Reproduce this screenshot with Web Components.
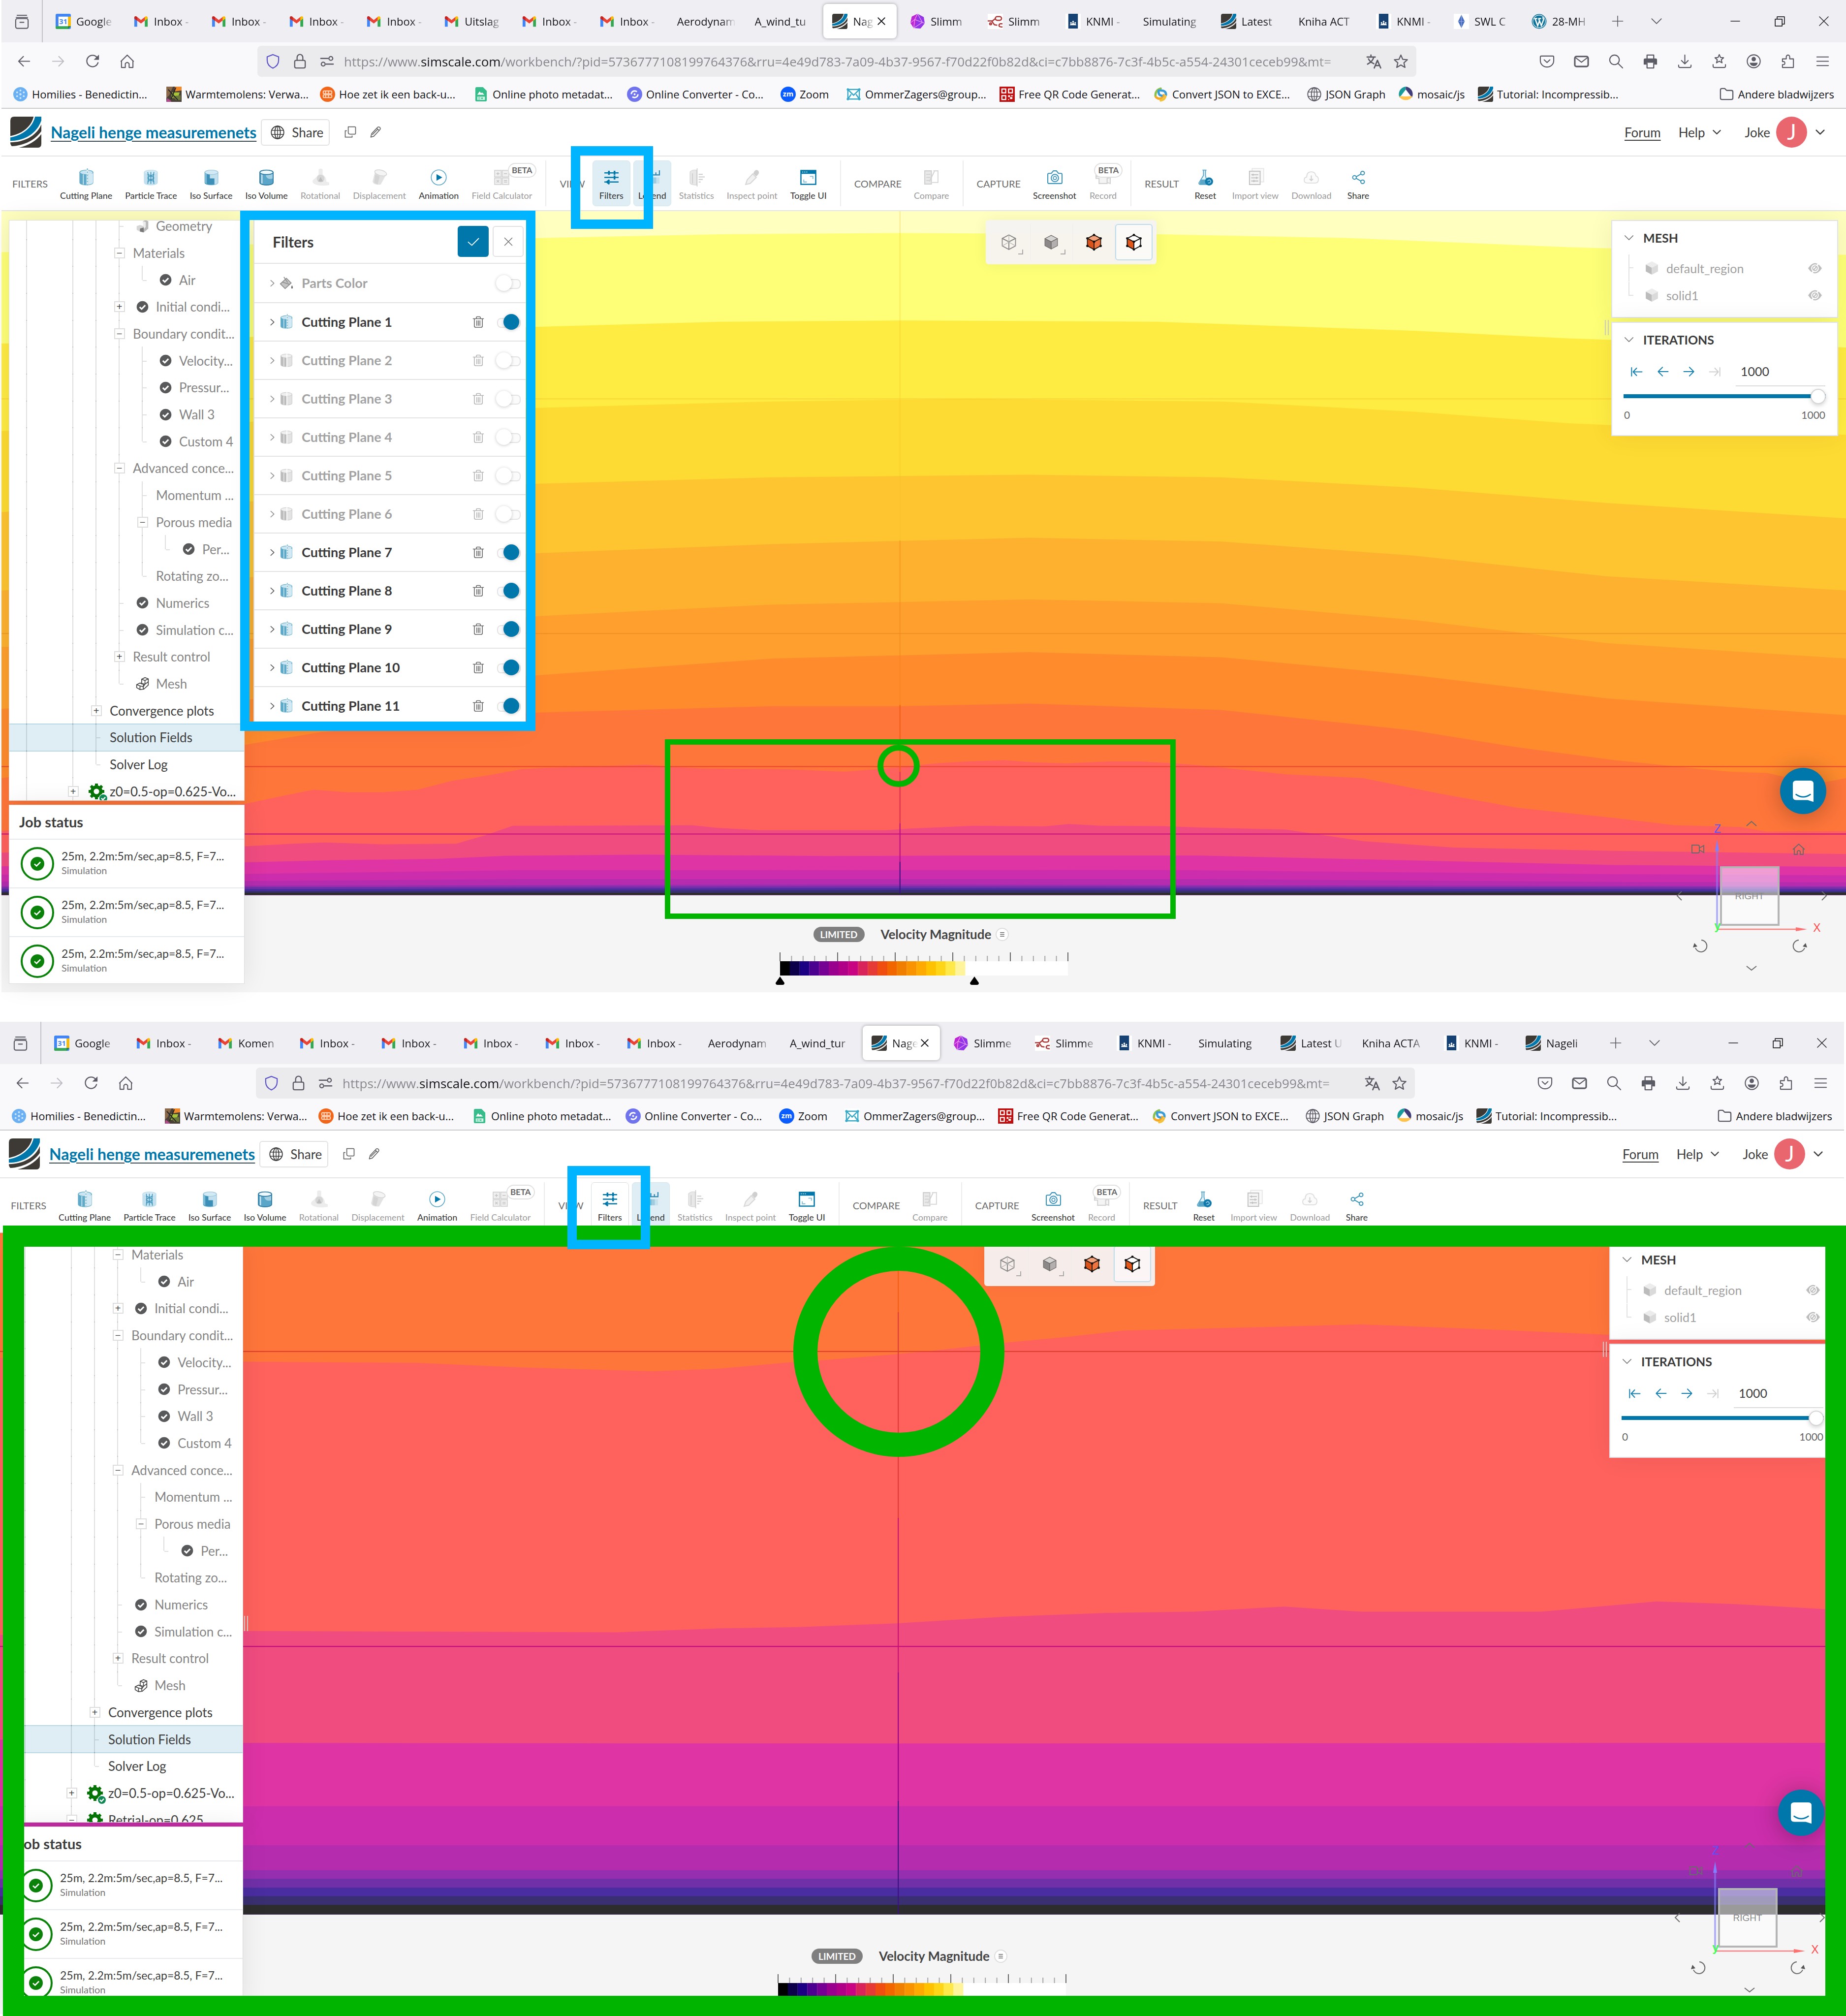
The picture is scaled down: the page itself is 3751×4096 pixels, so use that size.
<!DOCTYPE html>
<html lang="nl">
<head>
<meta charset="utf-8">
<title>Nageli henge measuremenets</title>
<style>
html,body{margin:0;background:#fff}
body{font-family:"Open Sans","Noto Sans",sans-serif;color:#15141a}
</style>
</head>
<body>
<compare-page></compare-page>
<script>
const LATO = 'Lato,"Open Sans",sans-serif';
const UI = '"Open Sans","Noto Sans",sans-serif';

/* ---------- icon set: 16 unit grid unless a viewBox is given ---------- */
const S = (d, w = 1) => `<path d="${d}" fill="none" stroke="currentColor" stroke-width="${w}" stroke-linecap="round" stroke-linejoin="round"/>`;
const CYL = (body, top, line) => `<path d="M1.5 3V13C1.5 16.2 14.5 16.2 14.5 13V3Z" fill="${body}" stroke="${line}" stroke-width=".7"/><ellipse cx="8" cy="3" rx="6.5" ry="2.2" fill="${top}" stroke="${line}" stroke-width=".7"/>`;
const CUBE = (t, l, r, s, w) => `<path d="M8 1.5L14 4.6 8 7.7 2 4.6Z" fill="${t}" stroke="${s}" stroke-width="${w}" stroke-linejoin="round"/><path d="M2 4.6L8 7.7V14.6L2 11.4Z" fill="${l}" stroke="${s}" stroke-width="${w}" stroke-linejoin="round"/><path d="M14 4.6L8 7.7V14.6L14 11.4Z" fill="${r}" stroke="${s}" stroke-width="${w}" stroke-linejoin="round"/>`;
const DOTS = [[8,1.5],[14,4.6],[2,4.6],[8,7.7],[8,14.6],[2,11.4],[14,11.4]].map(p => `<circle cx="${p[0]}" cy="${p[1]}" r="1.1" fill="#111"/>`).join('');
const LOGO = `<path d="M4 0H24C22 10 12 18 0 20V4Q0 0 4 0Z" fill="#3d3935"/><path d="M25.500 0H32V4C27 18 14 25 0 25V21.500C13 19 23 11 25.500 0Z" fill="#0077ab"/><path d="M32 8V15C26 24 14 30 1.500 30.500Q0 29 0 26.500C14 26.500 27 20 32 8Z" fill="#3d3935"/><path d="M32 18V28Q32 32 28 32H9C18 30 27 25 32 18Z" fill="#3d3935"/>`;
const ICONS = {
  archive: S('M3 1.5H13M2 3.8H14', 1) + `<rect x="1.500" y="5" width="13" height="10.300" rx="1.800" fill="none" stroke="currentColor" stroke-width="1.100"/>` + S('M6 9H10', 1.1),
  back: S('M14 8H2.500M7.500 3L2.500 8L7.500 13', 1.1),
  fwd: S('M2 8H13.500M8.500 3L13.500 8L8.500 13', 1.1),
  reload: S('M13.500 9.500A6 6 0 1 1 12.500 4', 1.2) + `<path d="M14.500 1V6.500H9Z" fill="currentColor"/>`,
  home: S('M2 7.500V14.500H6V10.500Q8 8 10 10.500V14.500H14V7.500M1.500 8L8 1.500L14.500 8', 1.1),
  shield: `<path d="M8 1L14 3.300V7C14 11 11.500 13.700 8 15.200C4.500 13.700 2 11 2 7V3.300Z" fill="none" stroke="#5a50c8" stroke-width="1.100"/>`,
  lock: `<rect x="2.500" y="7" width="11" height="8" rx="1.500" fill="none" stroke="currentColor" stroke-width="1.200"/>` + S('M5 7V4A3 3.200 0 0 1 11 4V7', 1.2),
  perms: S('M1.500 5H9M7 11H14.500', 1.3) + `<circle cx="12" cy="5" r="2" fill="none" stroke="currentColor" stroke-width="1.200"/><circle cx="4" cy="11" r="2" fill="none" stroke="currentColor" stroke-width="1.200"/>`,
  translate: S('M1 3.500H9.500M5 1.500V3.500M8 3.500C7 7.500 4.500 9.500 1.500 11M2.500 5.500C3.500 8 6 9.500 8 10.500M8.500 15L11.800 7L15.200 15M9.500 12.500H14', 1.4),
  star: S('M8 1.500L10 6L14.800 6.400L11.200 9.600L12.300 14.400L8 11.900L3.700 14.400L4.800 9.600L1.200 6.400L6 6Z', 1.2),
  pocket: S('M2 2.500H14Q15 2.500 15 3.500V7.500A7 6.500 0 0 1 1 7.500V3.500Q1 2.500 2 2.500M5 6.500L8 9.300L11 6.500', 1.1),
  mail: `<rect x="1" y="3" width="14" height="10.500" rx="1.800" fill="none" stroke="currentColor" stroke-width="1.600"/>` + S('M1.500 4L8 9L14.500 4', 1.1),
  search: `<circle cx="6.500" cy="6.500" r="5" fill="none" stroke="currentColor" stroke-width="1.100"/>` + S('M10.300 10.300L15 15', 1.1),
  print: `<path d="M2.500 5H13.500Q15 5 15 6.500V11.500H12V9.500H4V11.500H1V6.500Q1 5 2.500 5Z" fill="currentColor"/>` + S('M4.500 5V1.500H11.500V5M4.500 10V15H11.500V10', 1.2),
  download: S('M8 1.500V10.500M4.500 7.200L8 10.700L11.500 7.200M1.500 12V13Q1.500 14.500 3 14.500H13Q14.500 14.500 14.500 13V12', 1.1),
  starbox: S('M8 1L9.300 4L12.500 4.300L10.100 6.400L10.900 9.600L8 7.900L5.100 9.600L5.900 6.400L3.500 4.300L6.700 4ZM1.500 11.500V13Q1.500 14.500 3 14.500H13Q14.500 14.500 14.500 13V11.500', 1.1),
  account: `<circle cx="8" cy="8" r="6.800" fill="none" stroke="currentColor" stroke-width="1.100"/><circle cx="8" cy="5.700" r="2.300" fill="currentColor"/><path d="M3.800 9.500H12.200Q11.500 13 8 13Q4.500 13 3.800 9.500Z" fill="currentColor"/>`,
  puzzle: S('M2 5.500H6V3.500A1.800 2 0 0 1 9.600 3.500V5.500H13.500V14.500H2V11.500H3.500A1.600 1.700 0 0 0 3.500 8.300H2Z', 1.1),
  menu: S('M2 3.500H14M2 8H14M2 12.500H14', 1.1),
  plus: S('M8 1.500V14.500M1.500 8H14.500', 1), down: S('M2 5L8 11L14 5', 1.1), caret: S('M2 5L8 11L14 5', 1.9), chevr: S('M5 2.500L11 8L5 13.500', 1.6),
  min: S('M2 8H14', 1.1), restore: S('M2 5H11V14H2ZM4.500 5V2H14V11.500H11', 1.1), close: S('M2 2L14 14M14 2L2 14', 1), tabx: S('M2 2L14 14M14 2L2 14', 1.6),
  folder: S('M1.500 3.500Q1.500 2 3 2H6L8 4H13Q14.500 4 14.500 5.500V12Q14.500 13.500 13 13.500H3Q1.500 13.500 1.500 12Z', 1.2),
  globe: `<circle cx="8" cy="8" r="6.800" fill="none" stroke="currentColor" stroke-width="1"/><ellipse cx="8" cy="8" rx="3" ry="6.800" fill="none" stroke="currentColor" stroke-width="1"/>` + S('M1.500 5.700H14.500M1.500 10.300H14.500M8 1.200V14.800', .8),
  copy: S('M5.500 1.500H13Q14 1.500 14 2.500V9Q14 10 13 10H7.500Q5.500 10 5.500 8ZM3.500 6H2V13.500H10V12', 1),
  pencil: S('M2.500 13.500L3.500 9.500L10.500 2Q12 1 13.300 2.500Q14 4 13 5L6 12.500ZM9.500 3.200L12 5.700M4.500 10.500L10.500 4.500', 1),
  cal: `<rect x="0" y="0" width="16" height="16" rx="1.500" fill="#4285f4"/><path d="M13 3H16V13H13Z" fill="#fbbc04"/><path d="M0 13H13V16H1.500Q0 16 0 14.500Z" fill="#34a853"/><path d="M13 13H16L13 16Z" fill="#1b8a3e"/><rect x="3" y="3" width="10" height="10" fill="#fff"/><text x="8" y="10.800" text-anchor="middle" font-size="7.500" font-weight="700" font-family="Open Sans" fill="#4285f4">31</text>`,
  gmail: `<path d="M1 4V13.500H4V7Z" fill="#4285f4"/><path d="M15 4V13.500H12V7Z" fill="#34a853"/><path d="M1 3.500Q1.500 2 3.500 3L8 6.600L12.500 3L12.500 6.700L8 10.200L1 5Z" fill="#ea4335"/><path d="M12 3.300Q14.500 1.700 15 4V5L12 7.300Z" fill="#fbbc04"/><path d="M1 4Q1.300 2.300 3 2.700L4 3.500V7.300L1 5Z" fill="#c5221f"/>`,
  logo: [32, LOGO],
  sentry: `<path d="M8 0L14.500 3.500L15.500 10L11 15.500L4 15L.5 9.500L2 3Z" fill="#9334e6"/><path d="M8 0L2 3L.5 9.500L4 15L6 11Z" fill="#c026d3"/><path d="M8 0L5 6L13 9L8 0M5 6L4 15L13 9M.5 9.500L5 6M13 9L15.500 10" fill="none" stroke="#e9a8ff" stroke-width=".6"/>`,
  redgraph: `<rect width="16" height="16" fill="#fff"/><g fill="none" stroke="#b03a3a" stroke-width="1.300"><rect x="8" y="3" width="6.500" height="3.800" rx="1.900"/><path d="M0 7.500H5L8 5M4 7.500L7 11.500L10 12"/><circle cx="3" cy="10.500" r="1"/><path d="M15.500 10.500H13Q11.500 11 12 13Q13 14 15.500 13.800"/></g>`,
  knmi: `<rect width="16" height="16" fill="#fff"/><rect x="3" y="0" width="10" height="15.500" fill="#154273"/><g fill="#fff"><circle cx="5.800" cy="9.500" r=".8"/><circle cx="8" cy="8.300" r=".9"/><circle cx="10.200" cy="9.500" r=".8"/><path d="M4.500 12Q5.800 9.500 6.600 10.800L8 8.800L9.400 10.800Q10.200 9.500 11.500 12Z"/></g>`,
  swl: `<rect width="16" height="16" fill="#fff"/><path d="M8 1L11.500 8L8 15L4.500 8Z" fill="#4a6fc0"/><path d="M8 1V15M4.500 8H11.500" stroke="#8ea9dd" stroke-width=".6"/>`,
  wp: `<circle cx="8" cy="8" r="7.700" fill="#0f7299"/><circle cx="8" cy="8" r="6.600" fill="none" stroke="#cfe6ef" stroke-width=".7"/><path d="M2.800 5H6M3.700 5L6.500 12.500L8.300 7.500M7 5H10M7.500 5L10.300 12.500L12.500 6.500Q12.700 4.500 11.500 3.800" fill="none" stroke="#fff" stroke-width="1.300"/>`,
  homil: `<circle cx="8" cy="8" r="7.500" fill="#6ab0f3"/><g fill="#cfe6ff"><circle cx="8" cy="8" r="1.200"/><circle cx="8" cy="4" r="1"/><circle cx="8" cy="12" r="1"/><circle cx="4.500" cy="6" r="1"/><circle cx="11.500" cy="6" r="1"/><circle cx="4.500" cy="10" r="1"/><circle cx="11.500" cy="10" r="1"/></g>`,
  warm: `<rect width="16" height="16" fill="#4a4038"/><path d="M0 0H7L3 9L0 12Z" fill="#8a6a4a"/><path d="M9 0H16V4L9 5Z" fill="#f08a2a"/><path d="M6 6H14L12 12H5Z" fill="#a6c33a"/><path d="M6 10L10 14H15V9Z" fill="#6b7a3a"/><path d="M1 12L5 15V16H0Z" fill="#b04a8a"/><path d="M2 3L12 14M10 1L5 13" stroke="#222" stroke-width="1"/>`,
  cool: `<circle cx="8" cy="8" r="8" fill="#f2661a"/><g fill="none" stroke="#ffd9c2" stroke-width="1"><rect x="3.500" y="4.500" width="9" height="3" rx="1"/><rect x="3.500" y="8.500" width="9" height="3" rx="1"/><path d="M6 4.500V7.500M9 4.500V7.500M6 8.500V11.500M9 8.500V11.500"/></g>`,
  exif: `<path d="M2 2Q2 .5 3.500 .5H10L14 4.500V14Q14 15.500 12.500 15.500H3.500Q2 15.500 2 14Z" fill="#36bd8b"/><path d="M4 8.500L6.500 5L8 7L9 6L11.500 8.500Z" fill="#fff"/><rect x="4" y="10.500" width="8" height="3.500" fill="#d8f5ea"/><path d="M5 11.500H7M5 13H7M8 11.500L10 13M10 11.500L8 13" stroke="#36bd8b" stroke-width=".6"/>`,
  conv: `<circle cx="8" cy="8" r="8" fill="#6f73ee"/><circle cx="8" cy="8" r="3.500" fill="none" stroke="#fff" stroke-width="1.500" stroke-dasharray="8 3"/><circle cx="8" cy="8" r="1" fill="#fff"/>`,
  zoom: `<circle cx="8" cy="8" r="8" fill="#0b5cff"/><text x="8" y="10.500" text-anchor="middle" font-size="7.500" font-weight="700" font-family="Open Sans" fill="#fff">zm</text>`,
  ommer: `<rect width="16" height="16" fill="#fff"/><path d="M2 3H14V13H2ZM2 3L8 9L14 3M2 13L5.500 8M14 13L10.500 8" fill="none" stroke="#38a9c9" stroke-width="1.300"/><g fill="#38a9c9"><circle cx="2" cy="3" r="1.300"/><circle cx="14" cy="3" r="1.300"/><circle cx="2" cy="13" r="1.300"/><circle cx="14" cy="13" r="1.300"/></g>`,
  qr: `<rect width="16" height="16" fill="#c00d0d"/><g fill="none" stroke="#fff" stroke-width="1.200"><rect x="2.500" y="2.500" width="4" height="4"/><rect x="9.500" y="2.500" width="4" height="4"/><rect x="2.500" y="9.500" width="4" height="4"/></g><path d="M9 9H11V11H13.500V13H11V11H9ZM12 9H14V10H12ZM9 13H10V14H9Z" fill="#fff"/>`,
  json: `<g fill="none" stroke-width="2.400" stroke-linecap="round"><path d="M8 2Q2 4 2.500 10" stroke="#8cc152"/><path d="M3 11Q8 15 11 9" stroke="#f6a821"/><path d="M6 4Q5 9 9 9.500" stroke="#3b9dd8"/><path d="M8 4Q14 4 13.500 9" stroke="#3b9dd8"/><path d="M13 10Q12 14 8 14.500" stroke="#f3c13a"/></g>`,
  mosaic: `<path d="M8 0A8 8 0 0 0 1.500 11.500L8 3Z" fill="#179b9b"/><path d="M8 0A8 8 0 0 1 14.500 11.500L8 3Z" fill="#403d7a"/><path d="M1 10H15A8 8 0 0 1 1 10Z" fill="#ffc34d"/><path d="M8 5L11 10H5Z" fill="#fff"/>`,
  /* toolbar */
  cut: CYL('#a8d3e6', '#c9e5f1', '#6db1cd') + `<path d="M1.500 3Q3 5 8 5.200V15.300Q1.500 15.300 1.500 13Z" fill="#5fa9c9"/><path d="M5 5V15" stroke="#d6edf6" stroke-width=".8"/><path d="M9 -1V17" stroke="#fff" stroke-width="1.500"/><path d="M9 -1V17" stroke="#6db1cd" stroke-width=".9" stroke-dasharray="2 1"/><path d="M10 4H14.500V13Q14 14.500 10 15Z" fill="#d3e9f3"/>`,
  particle: CYL('#c2e0ee', '#d3e9f3', '#c2e0ee') + `<g color="#3c94bb">` + S('M5 3Q6 8 5 14M11 3Q10 8 11 14M8 3V14M5 5L11 8M11 5L5 8M5 9L11 12M11 9L5 12', .8) + `</g>`,
  isosurf: CYL('#c2e0ee', '#d3e9f3', '#9fcbdf') + `<path d="M1.500 3Q3 5 6.500 5.200V9H11V15Q1.500 16 1.500 13Z" fill="#3c8fb6"/><path d="M1.500 3L3.500 4.500V14.500L1.500 13Z" fill="#7cbbd6"/>`,
  isovol: CYL('#a3cfe2', '#f0f8fb', '#2f88b2') + `<path d="M1.500 4V13C1.500 16.200 14.500 16.200 14.500 13V9Q8 11 7 5Q2 5 1.500 4Z" fill="#5ba6c8"/><path d="M3.500 5V14" stroke="#cfe7f1" stroke-width="1.200"/>` + `<path d="M1.500 3V13C1.500 16.200 14.500 16.200 14.500 13V3" fill="none" stroke="#2f7ea8" stroke-width=".9"/><ellipse cx="8" cy="3" rx="6.500" ry="2.200" fill="#eff8fc" stroke="#2f7ea8" stroke-width=".9"/>`,
  rot: `<path d="M6 0Q8 -1.500 10 0V5Q14 8 13.500 12L16.500 13V15.500Q8 17 2 14.500Q-1 13 .5 10.500Q4 8 6 5Z" fill="#ececec"/><circle cx="8" cy="9" r="3.800" fill="#d6d6d6"/><path d="M8 7.500L10.500 12H5.500Z" fill="#bdbdbd"/>`,
  disp: `<path d="M3.500 2L1 12Q2 16 9 15L14.500 5Z" fill="#e2e2e2"/><ellipse cx="9" cy="3.500" rx="6" ry="2.700" transform="rotate(14 9 3.500)" fill="#f4f4f4" stroke="#d2d2d2" stroke-width=".7"/><path d="M3.500 5L2.500 13L6 15L8 7Z" fill="#d4d4d4"/>`,
  anim: `<circle cx="8" cy="8" r="7.400" fill="#fff" stroke="#5aa6c7" stroke-width=".8"/><path d="M5.800 4.700L11.500 8L5.800 11.300Z" fill="#0077ab"/>`,
  calc: `<g fill="#efefef" stroke="#d0d0d0" stroke-width=".8"><rect x="1" y="1" width="6.500" height="6.500"/><rect x="8.500" y="1" width="6.500" height="6.500"/><rect x="1" y="8.500" width="6.500" height="6.500"/><rect x="8.500" y="8.500" width="6.500" height="6.500"/></g>` + `<path d="M4.200 2.800V5.800M2.700 4.200H5.800M10.200 4.200H13.300M3 10.500L5.500 13M5.500 10.500L3 13M10.200 11H13.300M10.200 12.600H13.300" stroke="#c2c2c2" stroke-width=".7"/>`,
  filters: `<g stroke="#0077ab" stroke-width="1.300" fill="#0077ab"><path d="M1 3.500H15M1 8H15M1 12.500H15"/></g><path d="M11 1.500V5.500M5.500 1.500V5.500M11 6V10M6 10.500L3.500 12.500L6 14.500" stroke="#0077ab" stroke-width="1.700" fill="none"/>`,
  legend: `<path d="M1 1V5.500H15V1M4.500 3V5M8 2V5M11.500 3V5" stroke="#2f88b2" stroke-width="1.100" fill="none"/><path d="M1 8H5V14H1Z" fill="#3c94bb"/><path d="M5 8H9V14H5Z" fill="#7cbbd6"/><path d="M9 8H12V14H9Z" fill="#9fcbdf"/><path d="M12 8H15V14H12Z" fill="#c6e0ec"/>`,
  stats: `<path d="M1.500 2.500Q4 0 8 .8V15.500Q1.500 15.500 1.500 13Z" fill="#e8e8e8" stroke="#d4d4d4" stroke-width=".6"/><path d="M4 4V14M8.500 -1V17" stroke="#ccc" stroke-width=".8"/><path d="M10 5H14M10 7.500H16M10 10H14M10 12.500H12" stroke="#ccc" stroke-width="1"/>`,
  inspect: `<path d="M10 2Q12 -.5 14 1.500Q15.500 3.500 13.500 5.500L12 7L9 4Z" fill="#cfcfcf"/><path d="M8.500 4.500L12 8L6 14L1.500 15L3 10.500Z" fill="#f1f1f1" stroke="#d6d6d6" stroke-width="1"/>`,
  toggle: `<rect x=".7" y="1.200" width="14.600" height="13.600" fill="#fff" stroke="#0077ab" stroke-width="1.200"/><rect x=".7" y="1.200" width="14.600" height="3.300" fill="#0077ab"/><path d="M2 2.700H3M4 2.700H5M6 2.700H7" stroke="#fff" stroke-width=".7"/><path d="M9.500 7H12.500V9.500M3.500 10V12.500H6.500" fill="none" stroke="#7cbbd6" stroke-width=".9"/>`,
  compare: `<path d="M1.500 1.500H8V14.500H1.500Z" fill="#e9e9e9" stroke="#cfcfcf"/><path d="M10 1.500H14.500V13H8.500" fill="#fff" stroke="#d8d8d8"/><path d="M3 5H7M3 8H7M3 11H6M11 2L6 12" stroke="#d2d2d2"/>`,
  camera: `<path d="M1 5Q1 4 2 4H4.500L6.500 1.500H9.500L11.500 4H14Q15 4 15 5V13Q15 14 14 14H2Q1 14 1 13Z" fill="none" stroke="#3c94bb" stroke-width="1"/><circle cx="8" cy="8.600" r="3.600" fill="none" stroke="#3c94bb" stroke-width="1"/><circle cx="8" cy="8.600" r="1.600" fill="none" stroke="#3c94bb" stroke-width=".8"/>`,
  record: `<path d="M2 2V7H12M3 7H12V14H4V9H1V5" fill="#f4f4f4" stroke="#d2d2d2" stroke-width="1"/><path d="M12 9L15 8V14L12 13Z" fill="#f4f4f4" stroke="#d2d2d2"/>`,
  reset: `<path d="M5 .8H9M6 1V6L1.500 13.500Q1.500 15 3 15H10L8 6V1" fill="#e6f3f8" stroke="#5aa6c7" stroke-width=".9"/><path d="M3.500 10H9V14.500H2Z" fill="#5aa6c7"/><circle cx="11.500" cy="12" r="4" fill="#0f7aab"/><path d="M10 11.500Q12 9 13.300 12Q12.500 14 10.500 13.300" fill="none" stroke="#9fd0e6" stroke-width=".8"/>`,
  importv: `<rect x="4" y="-2" width="13" height="15" fill="#fafafa" stroke="#e4e4e4" stroke-width=".9"/><rect x="1" y="1" width="12" height="15" fill="#f4f4f4" stroke="#bdbdbd" stroke-width="1"/><path d="M3 5H11M3 8.500H11M3 12H11M5 3.800V6.200M9 7.300V9.700M6 10.800V13.200" stroke="#bdbdbd" stroke-width="1"/>`,
  cloud: `<path d="M4 13.500Q1 13.500 1 10.500Q1 8 3.500 7.500Q3.500 2.500 8 2.500Q12 2.500 12.500 6.500Q15.200 7.300 15 10.500Q14.700 13.500 12 13.500Z" fill="#fbfbfb" stroke="#dcdcdc" stroke-width=".9"/><path d="M8 6V11M6.300 9.500L8 11.200L9.700 9.500" fill="none" stroke="#d0d0d0"/>`,
  share: `<path d="M5.500 7.500L10.500 4.500M5.500 8.800L10.500 11.700" stroke="#3c94bb"/><g fill="#fff" stroke="#3c94bb"><circle cx="4" cy="8" r="1.800"/><circle cx="12" cy="3.700" r="1.800"/><circle cx="12" cy="12.300" r="1.800"/></g>`,
  /* tree and panels */
  check: `<circle cx="8" cy="8" r="7" fill="#58595b"/><path d="M4.600 8.200L7 10.600L11.400 6" fill="none" stroke="#fff" stroke-width="1.800"/>`,
  geom: `<path d="M8.500 2L12 .8L15 2V11L9.500 15.500V8.500Z" fill="#b9b9b9"/><path d="M8.500 2L12 3V9L9 12V9Z" fill="#ececec"/><path d="M1 8L5 6.500L9.500 8V15L5 14.500L1 12.500Z" fill="#d6d6d6"/><path d="M5 11L9.500 9.500V15.500L5 14.500Z" fill="#777"/>`,
  mesh: `<g fill="none" stroke="#444" stroke-width="1"><path d="M7 3L11 1L15 2.500V10L9.500 15L5 15.500L1 13V9.500L5 7.500L7 8.500ZM7 3L11 4.500L15 2.500M11 4.500V9L9 12L5 11L1 9.500M9 12V15.500M5 11V15.500M7 8L11 9M11 9L15 6M5 7.500L9 9V12"/></g>`,
  gear: `<path d="M8 2.500V0M8 13.500V16M2.500 8H0M13.500 8H16M4 4L2.300 2.300M12 4L13.700 2.300M4 12L2.300 13.700M12 12L13.700 13.700" stroke="#067306" stroke-width="3"/><circle cx="8" cy="8" r="4.500" fill="#fff" stroke="#067306" stroke-width="3.400"/><circle cx="15" cy="15" r="4.300" fill="#0f8a55" stroke="#fff" stroke-width=".6"/><path d="M13 15L14.600 16.500L17 13.800" fill="none" stroke="#fff" stroke-width="1.200"/>`,
  ok: S('M1.500 8.500L6 12.500L14.500 4', 1.1),
  x: S('M3 3L13 13M13 3L3 13', 1.1),
  bucket: `<path d="M1 9L8 2.500L13.500 8L6.500 14.500Z" fill="#c4c4c4" stroke="#8d8d8d" stroke-width="1"/><path d="M3.500 7L11.500 9.500M5 1L9.500 7.500" stroke="#8d8d8d"/><path d="M14.500 10.500Q16.500 14 14.500 14.500Q12.500 14 14.500 10.500Z" fill="#666"/>`,
  trash: S('M1.500 4H14.500M5.500 4V2.500Q5.500 1.500 6.500 1.500H9.500Q10.500 1.500 10.500 2.500V4M3 4V13Q3 14.800 4.800 14.800H11.200Q13 14.800 13 13V4M6 6.500V12.500M8 6.500V12.500M10 6.500V12.500', 1),
  cubeg: CUBE('#ececec', '#bcbcbc', '#dadada', 'none', 0),
  cubew: CUBE('none', 'none', 'none', '#8a8a8a', .8) + `<path d="M8 1.500V8M2 11.400L8 8L14 11.400" stroke="#b5b5b5" stroke-width=".6" fill="none"/>`,
  cubes: CUBE('#d6d3d3', '#8c8888', '#b3afaf', '#6b6767', .6),
  cubeo: CUBE('#f4a27c', '#d9521a', '#ee7440', '#2b1a10', .8) + DOTS,
  cubeh: CUBE('#fff', '#e2561a', '#fff', '#1c1c1c', .9) + DOTS,
  eye: `<path d="M0 8Q8 -4 16 8Q8 20 0 8Z" fill="#bdbdbd"/><circle cx="8" cy="8" r="4.500" fill="#fff"/><circle cx="8" cy="8" r="2.700" fill="none" stroke="#bdbdbd" stroke-width="1.200"/><path d="M6.500 10L9.800 6" stroke="#bdbdbd" stroke-width="1.200"/><path d="M3.500 14.500L6 11.500M10.500 4.500L13 1.500" stroke="#fff" stroke-width="1.600"/>`,
  first: S('M1.500 2.500V13.500M15 8H3.500M8 3.200L3.500 8L8 12.800', 1.3), last: S('M14.500 2.500V13.500M1 8H12.500M8 3.200L12.500 8L8 12.800', 1.3),
  list: S('M4 4H12M4 8H12M4 12H12', 1.6),
  cutoff: CYL('#e3e3e3', '#efefef', '#cfcfcf') + `<path d="M1.500 3Q3 5 8 5.200V15.300Q1.500 15.300 1.500 13Z" fill="#bdbdbd"/><path d="M5 5V15" stroke="#eee" stroke-width=".8"/><path d="M8.500 0V16" stroke="#fff" stroke-width="1"/>`,
  chat: `<path d="M2.500 0H13.500Q16 0 16 2.500V16.500L11.500 15H2.500Q0 15 0 12.500V2.500Q0 0 2.500 0Z" fill="#fff"/><path d="M2.500 10.700Q8 14.500 13.500 10.700" fill="none" stroke="#0077ab" stroke-width="1" stroke-linecap="round"/>`
};

class Part extends HTMLElement {
  constructor() { super(); this.attachShadow({ mode: 'open' }); }
  connectedCallback() {
    this.shadowRoot.innerHTML = `<style>:host{display:block}*{box-sizing:border-box}button{font:inherit;color:inherit;border:0;background:none;padding:0;margin:0}a{color:inherit}${this.css()}</style>${this.html()}`;
  }
  css() { return ''; }
  html() { return '<slot></slot>'; }
}
const def = (n, c) => customElements.define(n, c);
const ic = (n, s = 31, extra = '') => `<ui-icon name="${n}" size="${s}" ${extra}></ui-icon>`;

def('ui-icon', class extends Part {
  css() { const s = this.getAttribute('size'); return `:host{display:block;flex:none;width:${s}px;height:${s}px}svg{display:block;width:100%;height:100%;overflow:visible}`; }
  html() { const i = ICONS[this.getAttribute('name')]; const [v, b] = Array.isArray(i) ? i : [16, i]; return `<svg viewBox="0 0 ${v} ${v}" aria-hidden="true">${b}</svg>`; }
});

/* ---------- browser chrome ---------- */
const TABS = {
  one: [['cal','Google'],['gmail','Inbox -'],['gmail','Inbox -'],['gmail','Inbox -'],['gmail','Inbox -'],['gmail','Uitslag'],['gmail','Inbox -'],['gmail','Inbox -'],['','Aerodynam'],['','A_wind_tu'],['logo','Nag',1],['sentry','Slimm'],['redgraph','Slimm'],['knmi','KNMI -'],['','Simulating'],['logo','Latest'],['','Kniha ACT'],['knmi','KNMI -'],['swl','SWL C'],['wp','28-MH']],
  two: [['cal','Google'],['gmail','Inbox -'],['gmail','Komen'],['gmail','Inbox -'],['gmail','Inbox -'],['gmail','Inbox -'],['gmail','Inbox -'],['gmail','Inbox -'],['','Aerodynam'],['','A_wind_tur'],['logo','Nage',1],['sentry','Slimme'],['redgraph','Slimme'],['knmi','KNMI -'],['','Simulating'],['logo','Latest U'],['','Kniha ACTA'],['knmi','KNMI -'],['logo','Nageli']]
};
def('tab-strip', class extends Part {
  css() { return `
    :host{display:flex;height:86px;background:#efeef3;font:22px/30px ${UI}}
    .archive{width:84px;display:grid;place-items:center;border-right:2px solid #c4c3cb;color:#5b5b66}
    .tabs{flex:1;display:flex;gap:9px;padding:8px 4px 8px 8px}
    .tab{flex:1 1 80px;min-width:0;display:flex;align-items:center;gap:11px;padding:0 12px 0 18px;border-radius:8px;text-align:left}
    .tab span{flex:1;min-width:0;overflow:hidden;white-space:nowrap;-webkit-mask-image:linear-gradient(to right,#000 calc(100% - 28px),transparent);mask-image:linear-gradient(to right,#000 calc(100% - 28px),transparent)}
    .on{background:#fff;box-shadow:0 0 6px rgba(0,0,0,.35);gap:4px;padding-right:22px}
    .on span{margin-left:7px}
    .new{width:79px;display:grid;place-items:center;color:#5b5b66}
    .sys{width:90px;display:grid;place-items:center;color:#222}
    .gap{width:76px}`; }
  html() { return `<button class="archive" aria-label="Tabs">${ic('archive')}</button>
    <div class="tabs" role="tablist">${TABS[this.getAttribute('set')].map(t => `<button role="tab" class="tab ${t[2] ? 'on' : ''}">${t[0] ? ic(t[0]) : ''}<span>${t[1]}</span>${t[2] ? ic('tabx', 18) : ''}</button>`).join('')}</div>
    <button class="new" aria-label="New tab">${ic('plus', 26)}</button><button class="new" aria-label="All tabs">${ic('down', 26)}</button><div class="gap"></div>
    <button class="sys" aria-label="Minimise">${ic('min', 24)}</button><button class="sys" aria-label="Restore">${ic('restore', 25)}</button><button class="sys" aria-label="Close">${ic('close', 24)}</button>`; }
});
def('nav-bar', class extends Part {
  css() { return `
    :host{display:flex;align-items:center;height:77px;padding:0 13px 0 10px;background:#f9f9fb;color:#5b5b66}
    .b{width:70px;height:63px;display:grid;place-items:center}.dim{color:#bcbcc3}
    .url{width:2355px;flex:0 1 auto;height:63px;margin-left:230px;margin-right:auto;background:#ebebed;border-radius:8px;display:flex;align-items:center;padding:0 4px}
    .i{width:55px;display:grid;place-items:center}
    input{flex:1;min-width:0;height:60px;border:0;outline:0;padding:0;margin-left:7px;font:26px/62px ${UI};
      color:transparent;background:linear-gradient(to right,#86868c 156px,#15141a 156px,#15141a 320px,#86868c 320px,#86868c calc(100% - 90px),transparent);-webkit-background-clip:text;background-clip:text}`; }
  html() { const b = (n, l, c = '', s = 31) => `<button class="b ${c}" aria-label="${l}">${ic(n, s)}</button>`;
    return b('back','Back') + b('fwd','Forward','dim') + b('reload','Reload') + b('home','Home') +
    `<div class="url"><span class="i">${ic('shield')}</span><span class="i">${ic('lock')}</span><span class="i">${ic('perms')}</span>
     <input aria-label="Address" value="https://www.simscale.com/workbench/?pid=5736777108199764376&amp;rru=4e49d783-7a09-4b37-9567-f70d22f0b82d&amp;ci=c7bb8876-7c3f-4b5c-a554-24301ceceb99&amp;mt=">
     <button class="i" aria-label="Translate">${ic('translate')}</button><button class="i" aria-label="Bookmark">${ic('star')}</button></div>` +
    b('pocket','Pocket') + b('mail','Mail') + b('search','Search') + b('print','Print') + b('download','Downloads') + b('starbox','Bookmarks') + b('account','Account') + b('puzzle','Extensions') + b('menu','Menu'); }
});
const MARKS = [['homil','Homilies - Benedictin...'],['warm','Warmtemolens: Verwa...'],['cool','Hoe zet ik een back-u...'],['exif','Online photo metadat...'],['conv','Online Converter - Co...'],['zoom','Zoom',133],['ommer','OmmerZagers@group...'],['qr','Free QR Code Generat...'],['json','Convert JSON to EXCE...'],['globe','JSON Graph',186],['mosaic','mosaic/js',162],['logo','Tutorial: Incompressib...']];
def('bookmark-bar', class extends Part {
  css() { return `
    :host{display:flex;align-items:center;height:58px;padding:0 24px 0 23px;background:#f9f9fb;border-bottom:2px solid #cbcbce;font:22px/30px ${UI};color:#15141a}
    a{display:flex;align-items:center;gap:8px;width:312px;white-space:nowrap;text-decoration:none}
    a:last-child{width:auto;margin-left:auto}
    ui-icon{color:#5b5b66}`; }
  html() { return MARKS.map(m => `<a href="#"${m[2] ? ` style="width:${m[2]}px"` : ''}>${ic(m[0])}${m[1]}</a>`).join('') + `<a href="#">${ic('folder')}Andere bladwijzers</a>`; }
});

/* ---------- workbench ---------- */
def('app-header', class extends Part {
  css() { return `
    :host{display:flex;align-items:center;height:97px;padding:0 42px 0 18px;border-bottom:2px solid #e4e4e6;background:#fff;font:26px/34px ${LATO};color:#3c3c3c}
    .t{font-weight:700;font-size:32px;line-height:38px;color:#0077ab;margin:0 9px 0 19px;text-decoration:underline;text-decoration-color:#3c4a52;text-underline-offset:5px;text-decoration-thickness:2px}
    .share{height:54px;width:140px;display:flex;align-items:center;gap:14px;padding-left:17px;border:2px solid #e2e2e4;border-radius:6px}
    .ico{width:51px;display:grid;place-items:center;color:#666}
    .copy{margin-left:16px}
    .r{margin-left:auto;display:flex;align-items:center}
    .forum{text-underline-offset:5px;text-decoration-thickness:2px;margin-right:36px}
    .m{display:flex;align-items:center;gap:14px}
    .user{margin-left:48px;gap:12px}
    .user ui-icon{margin-left:4px}
    .av{width:63px;height:63px;border-radius:50%;background:#e9666f;color:#fff;font-size:44px;line-height:61px;text-align:center;font-weight:400}`; }
  html() { return `${ic('logo', 63)}<a class="t" href="#">Nageli henge measuremenets</a>
    <button class="share">${ic('globe', 30)}Share</button><button class="ico copy" aria-label="Copy">${ic('copy', 28)}</button><button class="ico" aria-label="Rename">${ic('pencil', 28)}</button>
    <div class="r"><a class="forum" href="#">Forum</a><button class="m">Help ${ic('caret', 19)}</button><button class="m user">Joke<span class="av">J</span>${ic('caret', 21)}</button></div>`; }
});
def('tool-button', class extends Part {
  css() { return `
    :host{display:block;font:18px/24px ${LATO};color:#333}
    button{height:93px;min-width:77px;padding:13px 9px 9px;border-radius:7px;border:1px solid transparent;display:flex;flex-direction:column;align-items:center;gap:5px;white-space:nowrap;position:relative}
    :host([off]){color:#9a9a9a}
    :host([on]) button{background:#dfedf4;border-color:#d3e6ef}
    :host([box]) button{border-color:#d5dde2}
    .i{height:40px;display:grid;place-items:center;color:#2f88b2}
    .beta{position:absolute;left:calc(50% + 12px);top:4px;border:2px solid #e0e0e0;border-radius:20px;background:#fff;padding:0 6px;color:#666;font:700 17px/26px ${LATO}}
    :host([near]) .beta{left:calc(50% - 18px)}`; }
  html() { return `<button><span class="i">${ic(this.getAttribute('icon'), this.getAttribute('size') || 33)}</span><span><slot></slot></span>${this.hasAttribute('beta') ? '<span class="beta">BETA</span>' : ''}</button>`; }
});
def('tool-group', class extends Part {
  css() { return `
    :host{display:flex;align-items:center;gap:6px;padding-right:17px;margin-right:27px;border-right:2px solid #ececec;font:20px/26px ${LATO};color:#6c6c6c}
    :host(:last-child){border-right:0}
    .n{margin-right:9px}`; }
  html() { return `<span class="n">${this.getAttribute('label')}</span><slot></slot>`; }
});
def('tool-bar', class extends Part {
  css() { return `:host{display:flex;align-items:stretch;height:111px;padding:8px 0 8px 22px;background:#fff;border-bottom:2px solid #e4e4e6}`; }
  html() { const b = (i, t, a = '') => `<tool-button icon="${i}" ${a}>${t}</tool-button>`;
    return `<tool-group label="FILTERS">${b('cut','Cutting Plane')}${b('particle','Particle Trace')}${b('isosurf','Iso Surface')}${b('isovol','Iso Volume')}${b('rot','Rotational','off')}${b('disp','Displacement','off')}${b('anim','Animation')}${b('calc','Field Calculator','off beta')}</tool-group>
    <tool-group label="VIEW">${b('filters','Filters', this.getAttribute('filters'))}${b('legend','Legend','on')}${b('stats','Statistics','off')}${b('inspect','Inspect point','off')}${b('toggle','Toggle UI')}</tool-group>
    <tool-group label="COMPARE">${b('compare','Compare','off')}</tool-group>
    <tool-group label="CAPTURE">${b('camera','Screenshot')}${b('record','Record','off beta near')}</tool-group>
    <tool-group label="RESULT">${b('reset','Reset')}${b('importv','Import view','off size="29"')}${b('cloud','Download','off')}${b('share','Share')}</tool-group>`; }
});

/* ---------- contour plot ---------- */
const BAND = ['#ffffbf','#feff77','#ffec42','#fedb32','#fec530','#fdb12f','#fe9f2e','#ff8b2d','#ff763a','#ff625d','#f04c80','#df34a4','#cc2dac','#b52dae','#952faf','#7030a8','#4a2da0','#3a2f70','#2d2d2d'];
const W = 1436;
const PLOTS = {
  one: { top: 164, floor: 695.8, edges: [
    '0,196 190,190 417,185 560,182 700,181 900,182 1050,185 1220,192 1436,198',
    '0,267 190,262 417,254 560,250 700,249 900,250 1100,257 1220,263 1436,270',
    '0,335 190,328 417,317 600,312 750,310 950,312 1100,320 1220,329 1436,338',
    '0,398 190,390 417,376 600,371 800,369 950,371 1100,379 1250,391 1436,403',
    '0,459 190,449 417,430 600,423 800,418 950,421 1100,432 1250,448 1436,459',
    '0,503 190,497 417,479 600,470 800,466 950,469 1100,482 1250,500 1436,512',
    '0,551 190,544 417,525 600,512 800,507 950,511 1100,525 1250,543 1436,556',
    '0,605 190,579 250,569 417,554 600,549 700,549 800,547 950,552 1100,568 1180,581 1256,591 1315,597 1346,600 1375,601 1388,604 1420,608 1436,605',
    '0,646 190,625 213,620 243,614 270,616 297,616 324,614 351,607 378,603 405,598 423,597 502,594.500 519,596 546,597.500 612,598 656,600 694,597 727,593.500 752,592 781,591 801,592.500 829,593.500 862,592 886,592 914,593.500 933,595 1000,602 1060,605 1120,617 1180,628 1256,636 1302,641.500 1354,643 1374,646.500 1436,646',
    '0,663 190,658 227,656 251,655 297,656.500 354,656 378,649 398,642 423,642 538,641.600 557,643.600 590,645.500 689,645.500 705,644.300 757,642 812,642.500 831,640.700 856,642 904,642.300 933,643.400 1000,645 1060,654 1130,659 1256,661.500 1436,664',
    '0,673.600 190,670.400 257,668.800 340,667.800 392,665.400 502,664.500 643,665.600 745,665.200 933,665.200 1100,669 1256,672.500 1436,674',
    '0,680 190,679.500 400,676.600 900,676.400 1256,679.700 1436,680.500',
    '0,685.500 190,685 405,683.500 933,683.500 1256,685.700 1436,686', '0,689 190,688.500 700,687.600 1436,689', '0,690 700,689 1436,690', '0,691.500 700,690.500 1436,691.500', '0,693 700,692 1436,693', '0,694 700,694.200 1436,694'],
    lines: [['M0 310H1436','#f0a020',.25],['M0 492.500H1436','#e07a20',.35],['M0 596H1436','#e8402c',.9],['M0 648.400H1436','#c4107c',1],
      ['M699.500 164V420','#f0c020',.3],['M699.500 420V548','#f08010',.45],['M699.500 548V600','#f05a10',.9],['M699.500 600V640','#dc3048',1],['M699.500 640V670','#b80c80',1],['M699.500 670V695','#3c1080',1]] },
  two: { top: 958.4, floor: 1488.4, first: 8, edges: [
    '0,1055.600 190,1058.600 325,1059.500 406,1063 508,1066 560,1064 610,1059.500 646,1057 699,1052.600 724,1050.300 781,1044 834,1039 875,1034.300 968,1032 1060,1029.500 1149,1033 1217,1036 1252,1037.500 1436,1043',
    '0,1271 190,1268 480,1269 560,1266 620,1265 700,1262 780,1257 860,1254 930,1253 1000,1249 1060,1253 1200,1253 1290,1245 1350,1247 1420,1251 1436,1252',
    '0,1352.400 120,1355 700,1355.500 1436,1355', '0,1404.300 1436,1404.300','0,1434.600 1436,1434.600','0,1454 1436,1454','0,1460.700 1436,1460.700','0,1467.600 1436,1467.600','0,1474.300 1436,1474.300','0,1481 1436,1481'],
    lines: [['M0 1050.600H1436','#dc3c2c',.9],['M0 1280H1436','#c4107c',1],['M699.500 970V1020','#f05a10',.9],['M699.500 1020V1180','#dc3a35',1],['M699.500 1180V1300','#c41070',1],['M699.500 1300V1400','#980088',1],['M699.500 1400V1488','#3c1080',1]] }
};
def('contour-plot', class extends Part {
  css() { return `:host{position:absolute;inset:0}svg{display:block;width:100%;height:100%}`; }
  html() { const p = PLOTS[this.getAttribute('set')], f = p.first || 0;
    return `<svg viewBox="0 ${p.top} ${W} 607.500" preserveAspectRatio="none" aria-hidden="true"><rect y="${p.top}" width="${W}" height="608" fill="#f5f5f5"/><rect y="${p.top}" width="${W}" height="${p.floor - p.top}" fill="${BAND[f]}"/>` +
      p.edges.map((e, i) => `<path d="M${e.split(' ').join('L')}V${p.floor}H0Z" fill="${BAND[f + i + 1]}"/>`).join('') +
      p.lines.map(l => `<path d="${l[0]}" stroke="${l[1]}" stroke-width=".8" opacity="${l[2]}"/>`).join('') +
      `</svg>`; }
});

/* ---------- simulation tree ---------- */
/* guide codes per level: | through line, t branch, l last branch, + and - boxes */
const TREE = [['| ||t','geom','Geometry'],['| ||-','','Materials'],['| |||l','check','Air'],['| ||+','check','Initial condi...'],['| ||-','','Boundary condit...'],['| |||t','check','Velocity...'],['| |||t','check','Pressur...'],['| |||t','check','Wall 3'],['| |||l','check','Custom 4'],['| ||-','','Advanced conce...'],['| |||t','','Momentum ...'],['| |||-','','Porous media'],['| ||||l','check','Per...'],['| |||l','','Rotating zo...'],['| ||t','check','Numerics'],['| ||t','check','Simulation c...'],['| ||+','','Result control'],['| ||l','mesh','Mesh'],['| |+','','Convergence plots','d'],['| |t','','Solution Fields','d sel'],['| |l','','Solver Log','d'],['| +','gear','z0=0.5-op=0.625-Vo...','d'],['| -','gear','Retrial-op=0.625','d']];
def('tree-row', class extends Part {
  css() { return `
    :host{display:flex;align-items:stretch;padding-left:12px;font:26px/26px ${LATO};color:#858585;border:solid transparent;border-width:2px 0;margin-top:-2px}
    :host(.d){color:#3e3e3e}
    :host(.sel){background:#dfedf4;border-color:#b9d9e6}
    .c{width:47px;flex:none;position:relative;display:grid;place-items:center}
    .v::before{content:"";position:absolute;left:22px;top:-2px;bottom:-2px;width:2px;background:rgba(0,0,0,.12)}
    .l::before{bottom:50%}
    .h::after{content:"";position:absolute;left:24px;top:50%;width:8px;height:2px;background:rgba(0,0,0,.12)}
    button{width:22px;height:22px;border:2px solid #ddd;background:#fff;font:20px/16px "Liberation Sans",sans-serif;color:#444;position:relative}
    .t{margin-left:4px;align-self:center;white-space:nowrap}`; }
  html() { const g = this.getAttribute('guides'), i = this.getAttribute('icon');
    return [...g].map(k => k === ' ' ? '<span class="c"></span>' : k === '|' ? '<span class="c v"></span>' : k === 't' ? '<span class="c v h"></span>' : k === 'l' ? '<span class="c v l h"></span>' : `<span class="c v"><button>${k === '+' ? '+' : '−'}</button></span>`).join('') +
      (i ? `<span class="c">${ic(i, i === 'gear' ? 32 : 27)}</span>` : '') + `<span class="t"><slot></slot></span>`; }
});
def('tree-panel', class extends Part {
  css() { return `
    :host{height:1180px;overflow:hidden;background:#fff;border:1px solid #dcdcdc;box-shadow:0 0 50px rgba(0,0,0,.09)}
    .g{display:grid;grid-auto-rows:1fr;height:1203px;margin-top:-15px}
    :host([scrolled]) .g{height:1258px;margin-top:-56px}`; }
  html() { return `<div class="g">${TREE.slice(0, this.hasAttribute('scrolled') ? 23 : 22).map(r => `<tree-row class="${r[3] || ''}" guides="${r[0]}" icon="${r[1]}">${r[2]}</tree-row>`).join('')}</div>`; }
});
def('job-item', class extends Part {
  css() { return `
    :host{display:flex;align-items:center;height:99px;padding-left:23px;border-top:2px solid #e6e9ee;font:23px/30px ${LATO};color:#3e3e3e}
    .ring{width:68px;height:68px;flex:none;border:4px solid #0a820a;border-radius:50%;display:grid;place-items:center;margin-right:15px}
    svg{width:28px;height:28px}small{display:block;font-size:20px;line-height:28px;color:#777}p{margin:0;white-space:nowrap}div{margin-top:-4px}`; }
  html() { return `<span class="ring"><svg viewBox="0 0 16 16"><circle cx="8" cy="8" r="8" fill="#0a820a"/><path d="M4.500 8.200L7 10.500L11.500 6" fill="none" stroke="#fff" stroke-width="1.500"/></svg></span><div><p>25m, 2.2m:5m/sec,ap=8.5, F=7...</p><small>Simulation</small></div>`; }
});
def('job-panel', class extends Part {
  css() { return `:host{height:364px;overflow:hidden;background:#fff;border:1px solid #dcdcdc;box-shadow:0 0 50px rgba(0,0,0,.09)}h2{margin:0;height:68px;padding-left:20px;font:700 29px/68px ${LATO};color:#3c3c3c}`; }
  html() { return `<h2>Job status</h2><job-item></job-item><job-item></job-item><job-item></job-item>`; }
});

/* ---------- filters panel ---------- */
def('filter-row', class extends Part {
  css() { return `
    :host{display:flex;align-items:center;height:78px;padding-left:28px;border-top:2px solid #e3e3e6;font:700 27px/34px ${LATO};color:#3a3a3a}
    .chev{width:17px;display:grid;place-items:center;margin-right:6px;color:#666}
    ui-icon.k{margin-right:17px}
    label{flex:1}
    .trash{width:28px;display:grid;place-items:center;margin-right:22px;color:#666}
    :host([off]){color:#a2a2a2}
    :host([off]) .chev{color:#999}:host([off]) .trash{color:#b3b3b3}
    input{appearance:none;-webkit-appearance:none;width:60px;height:34px;margin:0;position:relative}
    input::before{content:"";position:absolute;left:2px;top:9px;width:44px;height:16px;border-radius:8px;border:2px solid #e3e3e3;background:#fbfbfb}
    input::after{content:"";position:absolute;left:0;top:1px;width:32px;height:32px;border-radius:50%;background:#fff;box-shadow:0 1px 6px rgba(0,0,0,.22)}
    input:checked::after{left:15px;background:#0077ab}`; }
  html() { const p = this.hasAttribute('parts'), off = this.hasAttribute('off');
    return `<button class="chev" aria-label="Expand">${ic('chevr', 17)}</button>${ic(p ? 'bucket' : off ? 'cutoff' : 'cut', 28, 'class="k"')}<label for="f">${this.getAttribute('label')}</label>${p ? '' : `<button class="trash" aria-label="Delete">${ic('trash', 26)}</button>`}<input id="f" type="checkbox" role="switch" ${off ? '' : 'checked'}>`; }
});
def('filters-panel', class extends Part {
  css() { return `
    :host{position:relative;align-self:flex-start;width:553px;height:1030px;overflow:hidden;background:#fff;border-left:2px solid #dcdcdc;box-shadow:0 0 50px rgba(0,0,0,.09)}
    header{display:flex;align-items:center;height:87px;padding:0 4px 0 37px;gap:8px;font:700 30px/34px ${LATO};color:#3c3c3c}
    header span{flex:1}
    button{width:63px;height:63px;border-radius:6px;display:grid;place-items:center}
    .y{background:#0077ab;color:#fff}.n{border:2px solid #e2e2e4;color:#777}
    filter-row:first-of-type{height:80px}`; }
  html() { return `<header><span>Filters</span><button class="y" aria-label="Apply">${ic('ok', 26)}</button><button class="n" aria-label="Close">${ic('x', 24)}</button></header>
    <filter-row parts off label="Parts Color"></filter-row>${Array.from({ length: 11 }, (_, i) => `<filter-row ${i > 0 && i < 6 ? 'off' : ''} label="Cutting Plane ${i + 1}"></filter-row>`).join('')}`; }
});

/* ---------- right column ---------- */
const CARD = `:host{background:#fff;border:2px solid #dfe2e8;box-shadow:0 0 50px rgba(0,0,0,.07)}
  h3{margin:0;height:69px;display:flex;align-items:center;gap:16px;padding:0 0 2px 23px;font:700 25px/34px ${LATO};color:#3a3a3a}h3 ui-icon{color:#777;margin-right:2px}`;
def('mesh-panel', class extends Part {
  css() { return CARD + `
    :host{height:199px}
    .r{display:flex;align-items:center;height:55px;padding:0 0 2px 33px;font:25px/34px ${LATO};color:#a0a0a0}
    .e{width:2px;height:55px;background:#e2e2e2;position:relative;margin-right:29px}
    .e::after{content:"";position:absolute;left:0;top:26px;width:10px;height:2px;background:#e2e2e2}
    .r:last-child .e{height:28px;align-self:flex-start}
    .r ui-icon.q{margin-right:13px}
    .r button{margin-left:auto;margin-right:31px}`; }
  html() { const r = t => `<div class="r"><span class="e"></span>${ic('cubeg', 33, 'class="q"')}${t}<button aria-label="Show ${t}">${ic('eye', 28)}</button></div>`;
    return `<h3>${ic('down', 22)}MESH</h3>${r('default_region')}${r('solid1')}`; }
});
def('iteration-panel', class extends Part {
  css() { return CARD + `
    :host{height:232px;font:25px/34px ${LATO};color:#3c3c3c}
    .c{display:flex;align-items:center;height:60px;padding:0 24px 0 23px;color:#1580b0}
    .c button{width:53px;height:40px;display:grid;place-items:center}.c .o{color:#cfcfcf}
    .c input{flex:1;min-width:0;height:60px;margin-left:16px;padding:0 10px;border:0;border-bottom:2px solid #dcdcdc;background:none;font:inherit;color:#3c3c3c}
    .s{display:block;appearance:none;-webkit-appearance:none;width:411px;height:34px;margin:3px 23px 0;background:linear-gradient(#0077ab,#0077ab) center/100% 8px no-repeat}
    .s::-webkit-slider-thumb{appearance:none;-webkit-appearance:none;width:31px;height:31px;border-radius:50%;background:#fff;border:2px solid #d5d5d5;box-shadow:0 3px 8px rgba(0,0,0,.18)}
    .l{display:flex;justify-content:space-between;padding:6px 24px 0;font-size:21px;line-height:30px;color:#666}`; }
  html() { return `<h3>${ic('down', 22)}ITERATIONS</h3><div class="c"><button aria-label="First">${ic('first', 25)}</button><button aria-label="Previous">${ic('back', 28)}</button><button aria-label="Next">${ic('fwd', 28)}</button><button class="o" aria-label="Last">${ic('last', 25)}</button><input aria-label="Iteration" value="1000"></div>
    <input class="s" type="range" min="0" max="1000" value="1000" aria-label="Iteration slider"><div class="l"><span>0</span><span>1000</span></div>`; }
});

/* ---------- floating controls ---------- */
def('view-modes', class extends Part {
  css() { return `
    :host{position:absolute;left:53%;top:18px;margin-left:14px;display:flex;width:347px;height:90px;background:rgba(245,243,243,.95);border-radius:6px;align-items:center;padding:0 8px 0 4px;box-shadow:0 0 30px rgba(0,0,0,.06)}
    button{flex:1;height:74px;display:grid;place-items:center;position:relative;border-right:1px solid #ececec}
    .on{flex:0 0 76px;border:2px solid #bfdcea;border-radius:6px;background:rgba(255,255,255,.5)}
    .m::after{content:"";position:absolute;right:14px;bottom:12px;width:8px;height:8px;border:solid #aaa;border-width:0 2px 2px 0}`; }
  html() { return `<button class="m" aria-label="Wireframe">${ic('cubew', 36)}</button><button class="m" aria-label="Solid">${ic('cubes', 34)}</button><button aria-label="Surfaces">${ic('cubeo', 36)}</button><button class="on" aria-label="Volumes">${ic('cubeh', 36)}</button>`; }
});
const SCALE = ['#000','#0b0049','#1c0083','#4b0090','#760093','#98008d','#b10088','#c80483','#d9235b','#e53a35','#f04d10','#f26600','#f07f00','#f99300','#ffaa00','#ffc200','#ffd517','#ffe84a','#fff39c'];
def('color-legend', class extends Part {
  css() { return `
    :host{position:absolute;bottom:15px;left:0;right:0;width:585px;margin:0 auto;font:700 26px/32px ${LATO};color:#444}
    .h{display:flex;align-items:center;padding-left:68px;margin-bottom:21px}
    .p{background:#7f7f7f;color:#fff;border-radius:16px;font-size:19px;line-height:31px;width:104px;text-align:center;margin-right:33px}
    button{width:27px;height:27px;border-radius:50%;background:#fff;border:2px solid #ddd;display:grid;place-items:center;margin-left:9px;color:#666}
    svg{display:block;width:100%;height:66px;overflow:visible}`; }
  html() { let t = ''; for (let i = 0; i <= 25; i++) { const m = i % 5 === 0; t += `<path d="M${(i * 23.4).toFixed(1)} ${m ? 0 : 7}V18" stroke="${m ? '#666' : '#a5a5a5'}" stroke-width="2"/>`; }
    return `<div class="h"><span class="p">LIMITED</span>Velocity Magnitude<button aria-label="Legend menu">${ic('list', 15)}</button></div>
    <svg viewBox="0 0 585 66" aria-hidden="true">${t}<rect y="18" width="585" height="29" fill="#fff"/>${SCALE.map((c, i) => `<rect x="${(i * 19.8).toFixed(1)}" y="18" width="20" height="29" fill="${c}"/>`).join('')}<path d="M0 49L-9 62Q-9 66 -5 66H5Q9 66 9 62Z"/><path d="M395 49L386 62Q386 66 390 66H400Q404 66 404 62Z"/></svg>`; }
});
def('nav-cube', class extends Part {
  css() { return `:host{position:absolute;right:26px;bottom:35px;width:330px;height:320px}svg{display:block;width:100%;height:100%;overflow:visible}`; }
  html() { const c = (d) => `<path d="${d}" fill="none" stroke="#6a6a6a" stroke-width="2"/>`;
    return `<svg viewBox="0 0 330 320"><rect x="102" y="101" width="117" height="117" fill="#fff" fill-opacity=".52" stroke="#b5b5b5" stroke-width="4"/>
    <text x="160" y="166" text-anchor="middle" font-family="Liberation Sans" font-size="19" fill="#8a8a8a">RIGHT</text>
    <path d="M94 65V224" stroke="#8080ff" stroke-opacity=".6" stroke-width="4"/><path d="M94 45L98 68H90Z" fill="#8080ff"/>
    <path d="M96 227H262" stroke="#ff8080" stroke-width="2.500"/><path d="M277 227L254 223V231Z" fill="#ff7070"/>
    <g font-family="Liberation Sans" font-size="23" text-anchor="middle"><text x="95" y="31" fill="#5555ff">Z</text><text x="297" y="232" fill="#ff4a4a">X</text><text x="95" y="228" fill="#44ff55" font-weight="700">y</text></g>
    ${c('M154 17L164 8L174 17')}${c('M154 302L164 310L174 302')}${c('M22 150L13 159L22 168')}${c('M307 150L316 159L307 168')}
    ${c('M43 56H55Q58 56 58 59V69Q58 72 55 72H43Q43 72 43 69ZM58 62L67 57V71L58 66')}
    ${c('M248 65L260 54L272 65M251 63V75H257V69Q260 65 263 69V75H269V63')}
    ${c('M62 249A12 12 0 1 1 50 265')}<path d="M45 264L48 255L54 262Z" fill="#555"/>${c('M260 249A12 12 0 1 0 272 265')}<path d="M277 264L274 255L268 262Z" fill="#555"/></svg>`; }
});
def('chat-launcher', class extends Part {
  css() { return `:host{position:absolute;right:40px;bottom:362px}button{width:94px;height:94px;border-radius:50%;background:#0077ab;display:grid;place-items:center;box-shadow:0 4px 50px rgba(0,0,0,.3)}`; }
  html() { return `<button aria-label="Open chat">${ic('chat', 42)}</button>`; }
});
def('drag-grip', class extends Part {
  css() { return `:host{position:absolute;width:8px;height:31px;border:solid #c9c9c9;border-width:0 2px}`; }
  html() { return ''; }
});
def('result-viewer', class extends Part {
  css() { return `
    :host{position:relative;display:flex;padding:18px 16px 17px 15px}
    .col{position:relative;display:flex;flex-direction:column;gap:8px}
    .left{width:479px;margin-right:18px}
    .right{width:461px;margin-left:auto}
    .left drag-grip{left:481px;top:760px}
    .right drag-grip{left:-13px;top:203px}`; }
  html() { const s = this.getAttribute('set');
    return `<contour-plot set="${s}"></contour-plot><div class="col left"><tree-panel ${s === 'two' ? 'scrolled' : ''}></tree-panel><job-panel></job-panel><drag-grip></drag-grip></div>
    ${s === 'one' ? '<filters-panel></filters-panel>' : ''}
    <div class="col right"><mesh-panel></mesh-panel><iteration-panel></iteration-panel><drag-grip></drag-grip></div>
    <view-modes></view-modes><color-legend></color-legend><nav-cube></nav-cube><chat-launcher></chat-launcher>`; }
});

/* ---------- page ---------- */
def('browser-window', class extends Part {
  css() { return `:host{position:relative;background:#fff}:host([set=one]){padding-left:3px}:host([set=two]){padding-right:4px}`; }
  html() { const s = this.getAttribute('set');
    return `<tab-strip set="${s}"></tab-strip><nav-bar></nav-bar><bookmark-bar></bookmark-bar><app-header></app-header><tool-bar filters="${s === 'one' ? 'on' : 'box'}"></tool-bar><result-viewer set="${s}"></result-viewer><slot></slot>`; }
});
def('mark-box', class extends Part {
  css() { const a = n => this.getAttribute(n); return `:host{position:absolute;left:${a('x')}px;top:${a('y')}px;width:${a('w')}px;height:${a('h')}px;border:${a('b')}px solid #00b4ff;box-sizing:border-box}:host([green]){border-color:#00b400}:host([round]){border-radius:50%}`; }
  html() { return ''; }
});
def('compare-page', class extends Part {
  css() { return `
    :host{display:flex;flex-direction:column;gap:60px;min-height:100vh;position:relative;overflow:hidden}
    .outline{position:absolute;left:6px;right:-1px;top:414px;bottom:-6px;border:43px solid #00b400}`; }
  html() { return `<browser-window set="one">
      <mark-box x="1160" y="297" w="167" h="168" b="19"></mark-box><mark-box x="488" y="428" w="600" h="1057" b="19"></mark-box>
      <mark-box green x="1351" y="1502" w="1038" h="365" b="11"></mark-box><mark-box green round x="1783" y="1513" w="86" h="86" b="12"></mark-box></browser-window>
    <browser-window set="two"><div class="outline"></div><mark-box green round x="1612" y="457" w="429" h="427" b="49"></mark-box><mark-box x="1153" y="293" w="168" h="169" b="19"></mark-box></browser-window>`; }
});
</script>
</body>
</html>
